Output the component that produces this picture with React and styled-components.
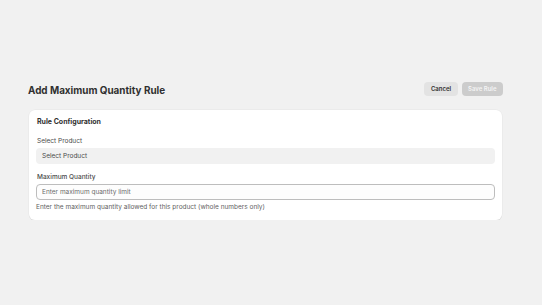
import React from "react";
import styled, { createGlobalStyle } from "styled-components";

const GlobalStyle = createGlobalStyle`
  html, body {
    margin: 0;
    padding: 0;
    background: #f1f1f1;
    font-family: Inter, "Noto Sans", "Liberation Sans", sans-serif;
    color: #303030;
  }
  * { box-sizing: border-box; }
`;

const Page = styled.div`
  width: 475px;
  margin-left: 28px;
  padding-top: 82px;
`;

const Header = styled.div`
  display: flex;
  align-items: center;
  justify-content: space-between;
  height: 14px;
  margin-bottom: 14px;
`;

const Title = styled.h1`
  margin: 0;
  font-size: 9.9px;
  font-weight: 650;
  line-height: 14px;
  color: #303030;
  padding-top: 1px;
`;

const Actions = styled.div`
  display: flex;
  gap: 4px;
`;

const Button = styled.button`
  height: 14px;
  padding: 0 6.5px;
  border: none;
  border-radius: 4px;
  font-family: inherit;
  font-size: 6px;
  font-weight: 600;
  line-height: 14px;
  background: ${(p) => (p.$primary ? "#cccccc" : "#e3e3e3")};
  color: ${(p) => (p.$primary ? "#f4f4f4" : "#303030")};
  cursor: ${(p) => (p.disabled ? "default" : "pointer")};
`;

const Card = styled.section`
  margin: 0 1px;
  background: #ffffff;
  border-radius: 6px;
  box-shadow: 0 1px 0 #dcdcdc, 0 0 0 0.5px #e6e6e6;
  padding: 6px 7px 8px;
`;

const SectionTitle = styled.h2`
  margin: 0 0 0 1px;
  font-size: 7px;
  font-weight: 650;
  line-height: 11px;
  color: #303030;
`;

const Label = styled.div`
  margin: ${(p) => p.$top}px 0 2px 1px;
  font-size: 6.5px;
  line-height: 10px;
  color: #4a4a4a;
  font-weight: ${(p) => (p.$strong ? 500 : 400)};
`;

const SelectBox = styled.div`
  height: 16px;
  border-radius: 4px;
  background: #f1f1f1;
  padding: 0 6px;
  display: flex;
  align-items: center;
  font-size: 6.5px;
  color: #4a4a4a;
`;

const Input = styled.input`
  display: block;
  width: 100%;
  height: 16px;
  margin: 0;
  border: 1px solid #bdbdbd;
  border-radius: 4px;
  padding: 0 5px;
  font-family: inherit;
  font-size: 6.5px;
  color: #303030;
  background: #fdfdfd;
  outline: none;
  &::placeholder {
    color: #6b6b6b;
  }
`;

const Help = styled.div`
  margin: 2px 0 0 0;
  font-size: 6.5px;
  line-height: 10px;
  color: #616161;
`;

export default function App() {
  return (
    <>
      <GlobalStyle />
      <Page>
        <Header>
          <Title>Add Maximum Quantity Rule</Title>
          <Actions>
            <Button>Cancel</Button>
            <Button $primary disabled>
              Save Rule
            </Button>
          </Actions>
        </Header>
        <Card>
          <SectionTitle>Rule Configuration</SectionTitle>
          <Label $top={9}>Select Product</Label>
          <SelectBox>Select Product</SelectBox>
          <Label $top={8} $strong>
            Maximum Quantity
          </Label>
          <Input placeholder="Enter maximum quantity limit" />
          <Help>
            Enter the maximum quantity allowed for this product (whole numbers
            only)
          </Help>
        </Card>
      </Page>
    </>
  );
}
